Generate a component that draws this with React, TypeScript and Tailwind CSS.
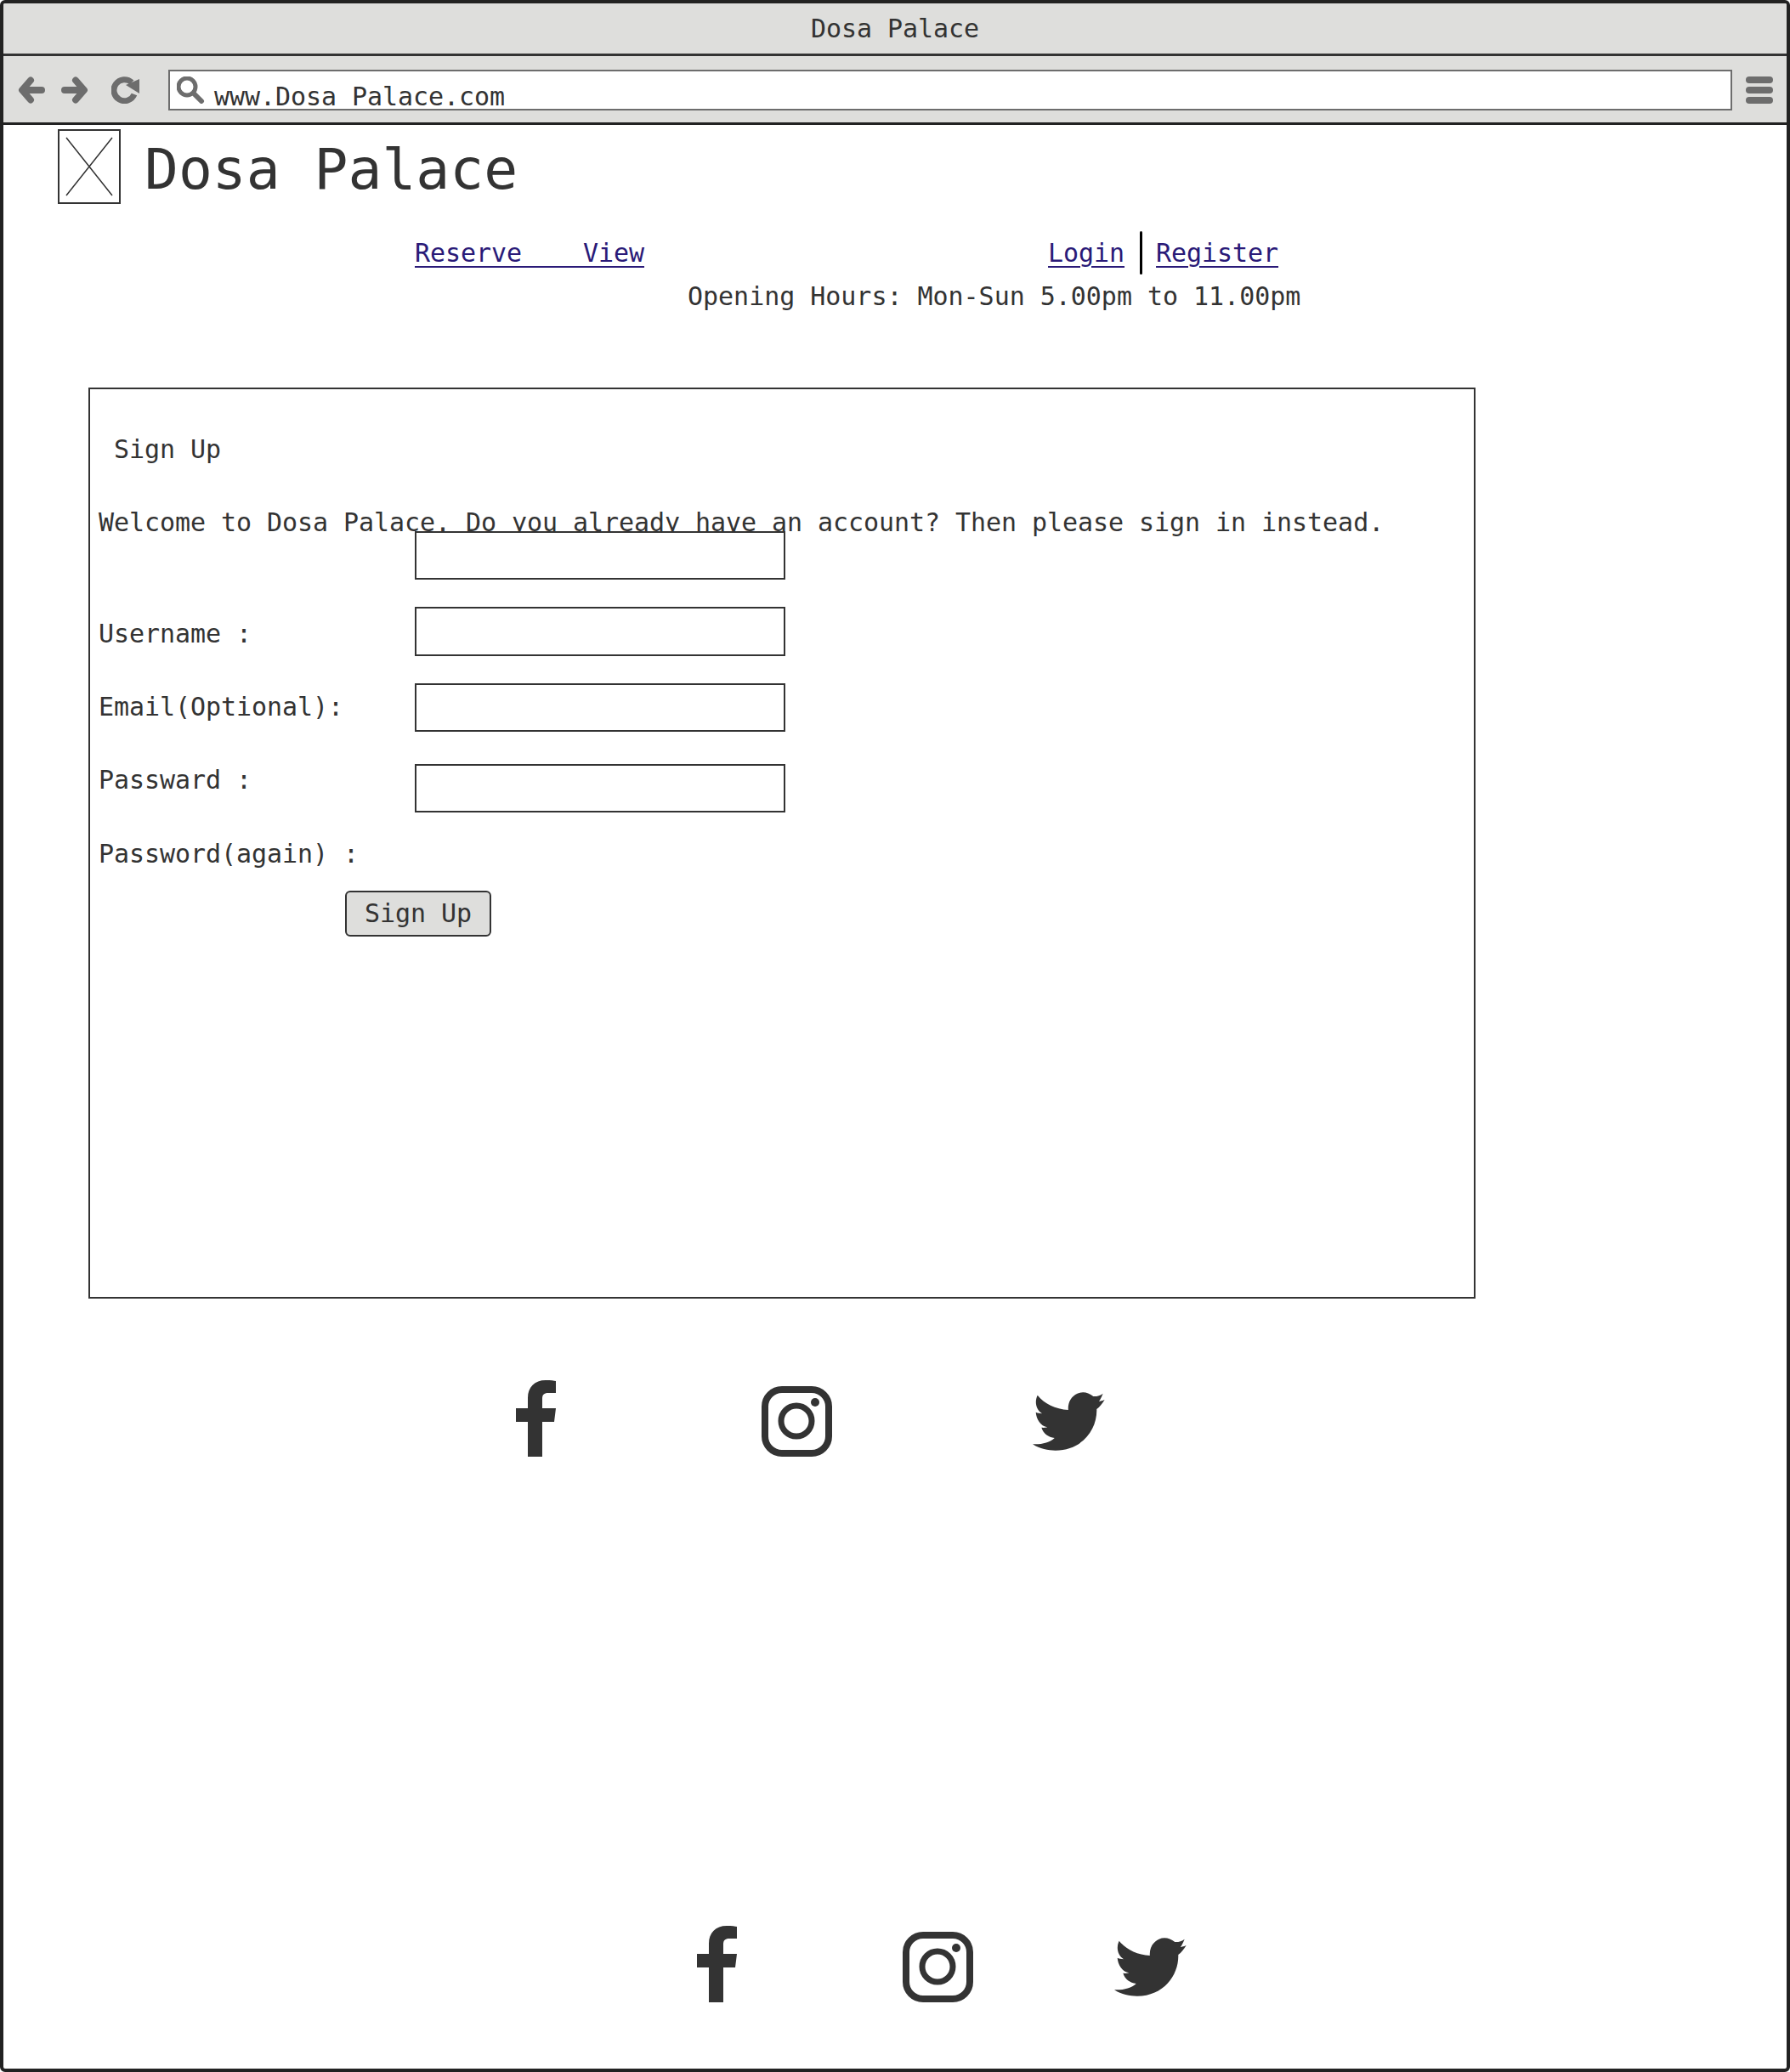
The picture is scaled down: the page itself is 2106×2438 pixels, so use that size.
import React from "react";

const BIRD =
  "M330 128C330 128 340 120 352 90C343 97 330 101 318 100C300 85 280 82 262 90C240 100 228 122 230 148C185 145 145 125 122 96C110 120 118 148 138 160C130 160 123 159 116 156C118 180 132 205 157 208C150 210 143 211 136 210C142 230 160 245 182 246C165 262 135 270 105 268C130 285 160 290 185 290C280 290 332 215 330 145C340 138 350 125 358 112C348 116 340 118 330 120Z";

function FacebookIcon() {
  return (
    <svg width="47" height="90" viewBox="0 0 47 90" className="shrink-0">
      <path
        fill="#333333"
        d="M31 90V49H45L47 33H31V22C31 17 33 15 38 15H47V1C45 .5 41 0 35 0C22 0 14 8 14 21V33H0V49H14V90Z"
      />
    </svg>
  );
}

function InstagramIcon() {
  return (
    <svg width="83" height="83" viewBox="0 0 83 83" className="shrink-0">
      <rect x="4" y="4" width="75" height="75" rx="20" fill="none" stroke="#333333" strokeWidth="8" />
      <circle cx="41" cy="41" r="18" fill="none" stroke="#333333" strokeWidth="7" />
      <circle cx="63" cy="19" r="5" fill="#333333" />
    </svg>
  );
}

function TwitterIcon() {
  return (
    <svg width="85" height="69" viewBox="105 85 254 206" className="shrink-0">
      <path fill="#333333" d={BIRD} />
    </svg>
  );
}

function ArrowIcon({ flip }: { flip?: boolean }) {
  return (
    <svg width="33" height="32" viewBox="0 0 33 32" className={flip ? "-scale-x-100" : ""}>
      <path
        d="M28 16H6M15 4.500L5 16L15 27.500"
        fill="none"
        stroke="#6d6d6d"
        strokeWidth="8"
        strokeLinecap="round"
        strokeLinejoin="round"
      />
    </svg>
  );
}

function ReloadIcon() {
  return (
    <svg width="33" height="32" viewBox="0 0 33 32">
      <path d="M24 7A12.500 12.500 0 1 0 27 21" fill="none" stroke="#6d6d6d" strokeWidth="7" />
      <path d="M33 3V20L17 10Z" fill="#6d6d6d" />
    </svg>
  );
}

function SearchIcon() {
  return (
    <svg width="33" height="32" viewBox="0 0 33 32" className="mt-[6px] ml-2 shrink-0 self-start">
      <circle cx="12" cy="12" r="10" fill="none" stroke="#6d6d6d" strokeWidth="5" />
      <path d="M20 20L29 29" stroke="#6d6d6d" strokeWidth="6" strokeLinecap="round" />
    </svg>
  );
}

export default function App() {
  return (
    <div className="flex h-[2438px] w-[2106px] flex-col overflow-hidden rounded-[6px] border-4 border-[#222222] bg-white font-['DejaVu_Sans_Mono',monospace] text-[30px] leading-[30px] tracking-[-0.06px] text-[#333333]">
      {/* browser title */}
      <div className="flex h-[62px] shrink-0 items-center justify-center border-b-[3px] border-[#333333] bg-[#dededc]">
        Dosa Palace
      </div>

      {/* browser toolbar */}
      <div className="flex h-[81px] shrink-0 items-center border-b-[3px] border-[#222222] bg-[#dededc] pt-[2px] pr-4 pl-[17px]">
        <ArrowIcon />
        <div className="ml-[17px]">
          <ArrowIcon flip />
        </div>
        <div className="ml-[27px]">
          <ReloadIcon />
        </div>
        <div className="ml-[34px] flex h-[48px] w-[1840px] items-end border-2 border-[#6d6d6d] bg-white">
          <SearchIcon />
          <span className="-mb-px ml-[11px]">www.Dosa Palace.com</span>
        </div>
        <div className="ml-4 flex w-8 flex-col gap-1">
          <div className="h-2 rounded-full bg-[#6d6d6d]" />
          <div className="h-2 rounded-full bg-[#6d6d6d]" />
          <div className="h-2 rounded-full bg-[#6d6d6d]" />
        </div>
      </div>

      {/* site header */}
      <div className="mt-[5px] ml-16 flex items-start">
        <svg width="74" height="88" viewBox="0 0 74 88">
          <rect x="1" y="1" width="72" height="86" fill="#ffffff" stroke="#333333" strokeWidth="2" />
          <path d="M10 10L64 78M64 10L10 78" stroke="#333333" strokeWidth="1.500" />
        </svg>
        <h1 className="mt-[3px] ml-7 h-[85px] text-[66.300px] leading-[88px] tracking-normal">Dosa Palace</h1>
      </div>

      <div className="mt-8 ml-[484px] flex h-[51px] items-center">
        <a href="#" className="whitespace-pre text-[#2a1a78] underline decoration-2 underline-offset-[5px]">
          Reserve    View
        </a>
        <a href="#" className="ml-[475px] text-[#2a1a78] underline decoration-2 underline-offset-[5px]">
          Login
        </a>
        <div className="mr-4 ml-[18px] h-[51px] w-[3px] rounded-full bg-black" />
        <a href="#" className="text-[#2a1a78] underline decoration-2 underline-offset-[5px]">
          Register
        </a>
      </div>
      <p className="mt-[11px] ml-[805px] tracking-[-0.03px]">Opening Hours: Mon-Sun 5.00pm to 11.00pm</p>

      {/* sign up panel */}
      <div className="mt-[92px] ml-[100px] h-[1072px] w-[1632px] shrink-0 border-2 border-[#333333] pt-14 pl-[10px]">
        <h2 className="pl-[18px]">Sign Up</h2>
        <p className="mt-14">Welcome to Dosa Palace. Do you already have an account? Then please sign in instead.</p>
        <div className="-mt-[5px] flex">
          <div className="flex w-[372px] flex-col">
            <label className="mt-[106px]">Username :</label>
            <label className="mt-14">Email(Optional):</label>
            <label className="mt-14">Passward :</label>
            <label className="mt-[57px]">Password(again) :</label>
          </div>
          <div className="flex flex-col">
            <input type="text" className="relative h-[57px] w-[436px] border-2 border-[#333333] bg-white" />
            <input type="text" className="mt-8 h-[58px] w-[436px] border-2 border-[#333333] bg-white" />
            <input type="text" className="mt-8 h-[57px] w-[436px] border-2 border-[#333333] bg-white" />
            <input type="password" className="mt-[38px] h-[57px] w-[436px] border-2 border-[#333333] bg-white" />
          </div>
        </div>
        <button
          type="button"
          className="mt-7 ml-[290px] h-[54px] w-[172px] rounded-[6px] border-2 border-[#333333] bg-[#dededc]"
        >
          Sign Up
        </button>
      </div>

      {/* social links */}
      <div className="mt-[96px] ml-[603px] flex items-start">
        <FacebookIcon />
        <div className="mt-[7px] ml-[242px]">
          <InstagramIcon />
        </div>
        <div className="mt-[14px] ml-[236px]">
          <TwitterIcon />
        </div>
      </div>

      <div className="mt-[552px] ml-[816px] flex items-start">
        <FacebookIcon />
        <div className="mt-[7px] ml-[195px]">
          <InstagramIcon />
        </div>
        <div className="mt-[14px] ml-[166px]">
          <TwitterIcon />
        </div>
      </div>
    </div>
  );
}
